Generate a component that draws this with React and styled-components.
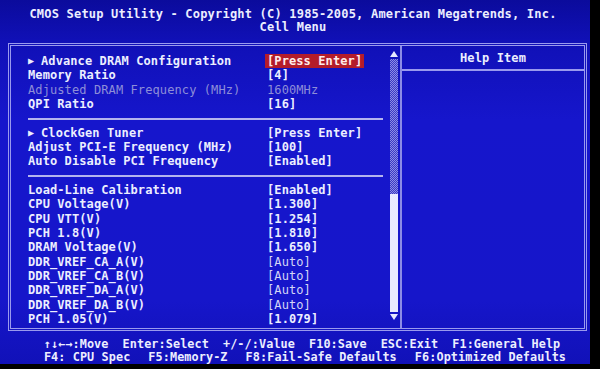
import React from "react";
import styled, { createGlobalStyle } from "styled-components";

const GlobalStyle = createGlobalStyle`
  html, body {
    margin: 0;
    padding: 0;
    background: #000;
  }
  body {
    width: 600px;
    height: 369px;
    overflow: hidden;
  }
`;

const Screen = styled.div`
  width: 590px;
  height: 364px;
  display: flex;
  flex-direction: column;
  background: linear-gradient(180deg, #0b0b9c 0px, #1010b6 40px, #1616cc 120px, #1616ca 300px, #1111b8 364px);
  color: #eceeff;
  font-family: "DejaVu Sans Mono", "Liberation Mono", monospace;
  font-weight: bold;
  font-size: 12px;
  letter-spacing: 0.1px;
`;

const Header = styled.div`
  padding-top: 8px;
  padding-right: 4px;
  display: flex;
  flex-direction: column;
  align-items: center;
  line-height: 13px;
  letter-spacing: 0.2px;
`;

const Frame = styled.div`
  margin: 9px 0 0 8px;
  width: 579px;
  height: 288px;
  box-sizing: border-box;
  border: 3px double #9a9aee;
  display: grid;
  grid-template-columns: 391px 1fr;
`;

const ListPanel = styled.div`
  display: flex;
  border-right: 2px solid #8c8ce6;
`;

const Items = styled.div`
  flex: 1;
  padding: 8px 7px 0 17px;
`;

const Group = styled.div`
  display: flex;
  flex-direction: column;
`;

const Separator = styled.div`
  height: 14px;
  display: flex;
  align-items: center;
  &::after {
    content: "";
    flex: 1;
    height: 2px;
    background: #b4b4ee;
  }
`;

const Row = styled.div`
  display: grid;
  grid-template-columns: 239px 1fr;
  height: 14.4px;
  line-height: 14.4px;
  white-space: nowrap;
  color: ${(p) => (p.$disabled ? "#8e8ed8" : "#eceeff")};
  font-weight: ${(p) => (p.$disabled ? "normal" : "bold")};
`;

const Label = styled.span`
  display: flex;
  align-items: center;
`;

const SubArrow = styled.span`
  display: inline-block;
  width: 13px;
  font-size: 10px;
  line-height: 14px;
`;

const Value = styled.span`
  justify-self: start;
  color: ${(p) => (p.$dim ? "#d4d6f6" : "inherit")};
  font-weight: ${(p) => (p.$dim ? "normal" : "inherit")};
  ${(p) =>
    p.$selected &&
    `
    background: #b41c2a;
    color: #ffecec;
    margin-left: -2px;
    padding: 0 2px;
  `}
`;

const ScrollBar = styled.div`
  width: 8px;
  margin-right: 2px;
  padding: 3px 0 6px;
  display: flex;
  flex-direction: column;
  align-items: center;
`;

const ScrollArrow = styled.span`
  width: 0;
  height: 0;
  margin: 2px 0;
  border-left: 4px solid transparent;
  border-right: 4px solid transparent;
  ${(p) =>
    p.$up
      ? "border-bottom: 6px solid #e6e8ff;"
      : "border-top: 6px solid #e6e8ff;"}
`;

const Track = styled.div`
  width: 8px;
  flex: 1;
  display: flex;
  flex-direction: column;
  background-color: #5a5ad0;
  background-image: repeating-conic-gradient(#8c8ce6 0% 25%, #3a3ac4 0% 50%);
  background-size: 2px 2px;
`;

const Thumb = styled.div`
  margin-top: auto;
  height: 118px;
  background: #e8eaff;
`;

const HelpPanel = styled.div`
  display: flex;
  flex-direction: column;
`;

const HelpTitle = styled.div`
  height: 23px;
  display: flex;
  align-items: center;
  justify-content: center;
  border-bottom: 2px solid #9a9aee;
`;

const Footer = styled.div`
  margin-top: 7px;
  display: flex;
  flex-direction: column;
  line-height: 13px;
  font-size: 11.8px;
`;

const KeyLine = styled.div`
  display: flex;
  justify-content: center;
  gap: ${(p) => p.$gap}px;
  padding-left: ${(p) => p.$shift}px;
  white-space: nowrap;
`;

const groups = [
  [
    { label: "Advance DRAM Configuration", value: "[Press Enter]", sub: true, selected: true },
    { label: "Memory Ratio", value: "[4]" },
    { label: "Adjusted DRAM Frequency (MHz)", value: "1600MHz", disabled: true },
    { label: "QPI Ratio", value: "[16]" },
  ],
  [
    { label: "ClockGen Tuner", value: "[Press Enter]", sub: true },
    { label: "Adjust PCI-E Frequency (MHz)", value: "[100]" },
    { label: "Auto Disable PCI Frequency", value: "[Enabled]" },
  ],
  [
    { label: "Load-Line Calibration", value: "[Enabled]" },
    { label: "CPU Voltage(V)", value: "[1.300]" },
    { label: "CPU VTT(V)", value: "[1.254]" },
    { label: "PCH 1.8(V)", value: "[1.810]" },
    { label: "DRAM Voltage(V)", value: "[1.650]" },
    { label: "DDR_VREF_CA_A(V)", value: "[Auto]", dim: true },
    { label: "DDR_VREF_CA_B(V)", value: "[Auto]", dim: true },
    { label: "DDR_VREF_DA_A(V)", value: "[Auto]", dim: true },
    { label: "DDR_VREF_DA_B(V)", value: "[Auto]", dim: true },
    { label: "PCH 1.05(V)", value: "[1.079]" },
  ],
];

const keys1 = ["↑↓←→:Move", "Enter:Select", "+/-/:Value", "F10:Save", "ESC:Exit", "F1:General Help"];
const keys2 = ["F4: CPU Spec", "F5:Memory-Z", "F8:Fail-Safe Defaults", "F6:Optimized Defaults"];

export default function App() {
  return (
    <>
      <GlobalStyle />
      <Screen>
        <Header>
          <div>CMOS Setup Utility - Copyright (C) 1985-2005, American Megatrends, Inc.</div>
          <div>Cell Menu</div>
        </Header>
        <Frame>
          <ListPanel>
            <Items>
              {groups.map((group, gi) => (
                <React.Fragment key={gi}>
                  {gi > 0 && <Separator />}
                  <Group>
                    {group.map((row) => (
                      <Row key={row.label} $disabled={row.disabled}>
                        <Label>
                          {row.sub && <SubArrow>▶</SubArrow>}
                          {row.label}
                        </Label>
                        <Value $selected={row.selected} $dim={row.dim}>
                          {row.value}
                        </Value>
                      </Row>
                    ))}
                  </Group>
                </React.Fragment>
              ))}
            </Items>
            <ScrollBar>
              <ScrollArrow $up />
              <Track>
                <Thumb />
              </Track>
              <ScrollArrow />
            </ScrollBar>
          </ListPanel>
          <HelpPanel>
            <HelpTitle>Help Item</HelpTitle>
          </HelpPanel>
        </Frame>
        <Footer>
          <KeyLine $gap={14} $shift={14}>
            {keys1.map((k) => (
              <span key={k}>{k}</span>
            ))}
          </KeyLine>
          <KeyLine $gap={18} $shift={20}>
            {keys2.map((k) => (
              <span key={k}>{k}</span>
            ))}
          </KeyLine>
        </Footer>
      </Screen>
    </>
  );
}
